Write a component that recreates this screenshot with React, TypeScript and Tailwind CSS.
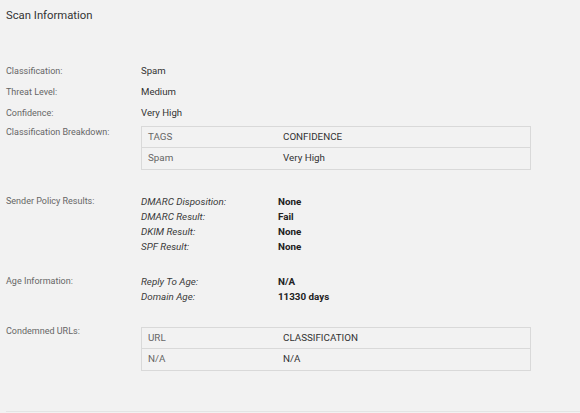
import React from "react";

const font = { fontFamily: "Roboto, 'Liberation Sans', sans-serif" };

function Label({ children }: { children: React.ReactNode }) {
  return <div className="w-[135px] shrink-0 text-[9px] leading-[16px] text-[#666]">{children}</div>;
}

function SimpleRow({ label, value }: { label: string; value: string }) {
  return (
    <div className="flex h-[21px] items-center">
      <div className="w-[135px] shrink-0 text-[9px] text-[#666]">{label}</div>
      <div className="text-[9.6px] text-[#333]">{value}</div>
    </div>
  );
}

function DataTable({ head, row }: { head: [string, string]; row: [string, string] }) {
  return (
    <div className="w-[390px] border border-[#d9d9d9] text-[9.8px]">
      <div className="flex h-[21px] items-center border-b border-[#d9d9d9]">
        <div className="w-[141px] shrink-0 pl-[6px] text-[#666]">{head[0]}</div>
        <div className="text-[#333]">{head[1]}</div>
      </div>
      <div className="flex h-[21px] items-center">
        <div className="w-[141px] shrink-0 pl-[6px] text-[#666]">{row[0]}</div>
        <div className="text-[#333]">{row[1]}</div>
      </div>
    </div>
  );
}

function PairList({ items }: { items: [string, string][] }) {
  return (
    <div className="pt-[2px]">
      {items.map(([k, v]) => (
        <div key={k} className="flex h-[15px] items-center text-[9.8px]">
          <div className="w-[137px] shrink-0 italic text-[#3a3a3a]">{k}</div>
          <div className="font-bold text-[#222]">{v}</div>
        </div>
      ))}
    </div>
  );
}

export default function App() {
  return (
    <div className="h-[413px] w-[580px] overflow-hidden bg-[#f2f2f2]" style={font}>
      <div className="pl-[6px]">
        <div className="h-[31px] text-[11.3px] leading-[31px] text-[#333]">Scan Information</div>

        <div className="mt-[30px]">
          <SimpleRow label="Classification:" value="Spam" />
          <SimpleRow label="Threat Level:" value="Medium" />
          <SimpleRow label="Confidence:" value="Very High" />
        </div>

        <div className="flex">
          <Label>Classification Breakdown:</Label>
          <div className="pt-[2px]">
            <DataTable head={["TAGS", "CONFIDENCE"]} row={["Spam", "Very High"]} />
          </div>
        </div>

        <div className="mt-[23px] flex">
          <Label>Sender Policy Results:</Label>
          <PairList
            items={[
              ["DMARC Disposition:", "None"],
              ["DMARC Result:", "Fail"],
              ["DKIM Result:", "None"],
              ["SPF Result:", "None"],
            ]}
          />
        </div>

        <div className="mt-[18px] flex">
          <Label>Age Information:</Label>
          <PairList
            items={[
              ["Reply To Age:", "N/A"],
              ["Domain Age:", "11330 days"],
            ]}
          />
        </div>

        <div className="mt-[18px] flex">
          <Label>Condemned URLs:</Label>
          <div className="pt-[4px]">
            <DataTable head={["URL", "CLASSIFICATION"]} row={["N/A", "N/A"]} />
          </div>
        </div>
      </div>
      <div className="ml-[6px] mt-[40px] border-t border-[#e4e4e4]" />
    </div>
  );
}
